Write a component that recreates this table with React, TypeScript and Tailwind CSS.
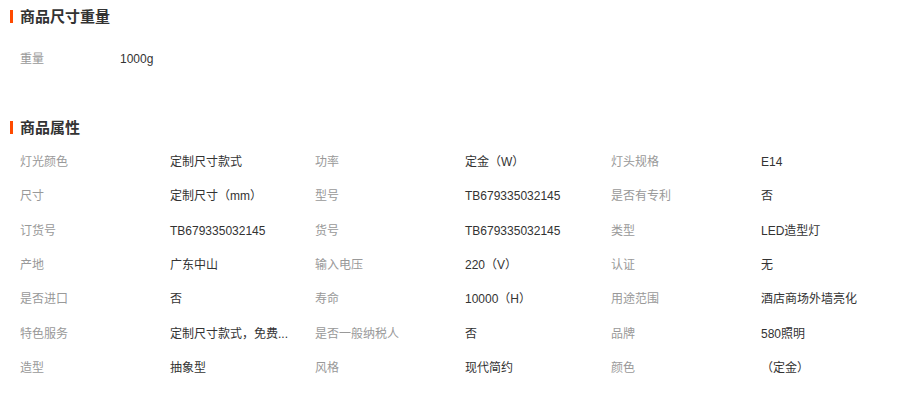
const weight = [{ label: '重量', value: '1000g' }];

const attrs: [string, string][] = [
  ['灯光颜色', '定制尺寸款式'],
  ['功率', '定金（W）'],
  ['灯头规格', 'E14'],
  ['尺寸', '定制尺寸（mm）'],
  ['型号', 'TB679335032145'],
  ['是否有专利', '否'],
  ['订货号', 'TB679335032145'],
  ['货号', 'TB679335032145'],
  ['类型', 'LED造型灯'],
  ['产地', '广东中山'],
  ['输入电压', '220（V）'],
  ['认证', '无'],
  ['是否进口', '否'],
  ['寿命', '10000（H）'],
  ['用途范围', '酒店商场外墙亮化'],
  ['特色服务', '定制尺寸款式，免费...'],
  ['是否一般纳税人', '否'],
  ['品牌', '580照明'],
  ['造型', '抽象型'],
  ['风格', '现代简约'],
  ['颜色', '（定金）'],
];

function Heading({ title }: { title: string }) {
  return (
    <div className="flex items-center h-[33px] pl-[10px]">
      <span className="w-[3px] h-[13px] bg-[#ff4a00] mr-[7px]" />
      <h3 className="text-[15px] font-bold text-[#333] leading-none">{title}</h3>
    </div>
  );
}

export default function App() {
  return (
    <div
      className="w-[915px] h-[399px] bg-white overflow-hidden text-[12px]"
      style={{ fontFamily: '"Liberation Sans", "Noto Sans CJK SC", sans-serif' }}
    >
      <Heading title="商品尺寸重量" />
      {weight.map((w) => (
        <div key={w.label} className="flex items-center h-[34px] mt-[9px] pl-[20px]">
          <span className="w-[100px] text-[#999]">{w.label}</span>
          <span className="text-[#333]">{w.value}</span>
        </div>
      ))}

      <div className="mt-[35px]">
        <Heading title="商品属性" />
      </div>
      <div className="grid grid-cols-[150px_145px_150px_146px_150px_1fr] pl-[20px] pt-[1px] auto-rows-[34.3px]">
        {attrs.map(([label, value]) => (
          <div key={label} className="contents">
            <div className="flex items-center text-[#999] whitespace-nowrap">{label}</div>
            <div className="flex items-center text-[#333] whitespace-nowrap">{value}</div>
          </div>
        ))}
      </div>
    </div>
  );
}
